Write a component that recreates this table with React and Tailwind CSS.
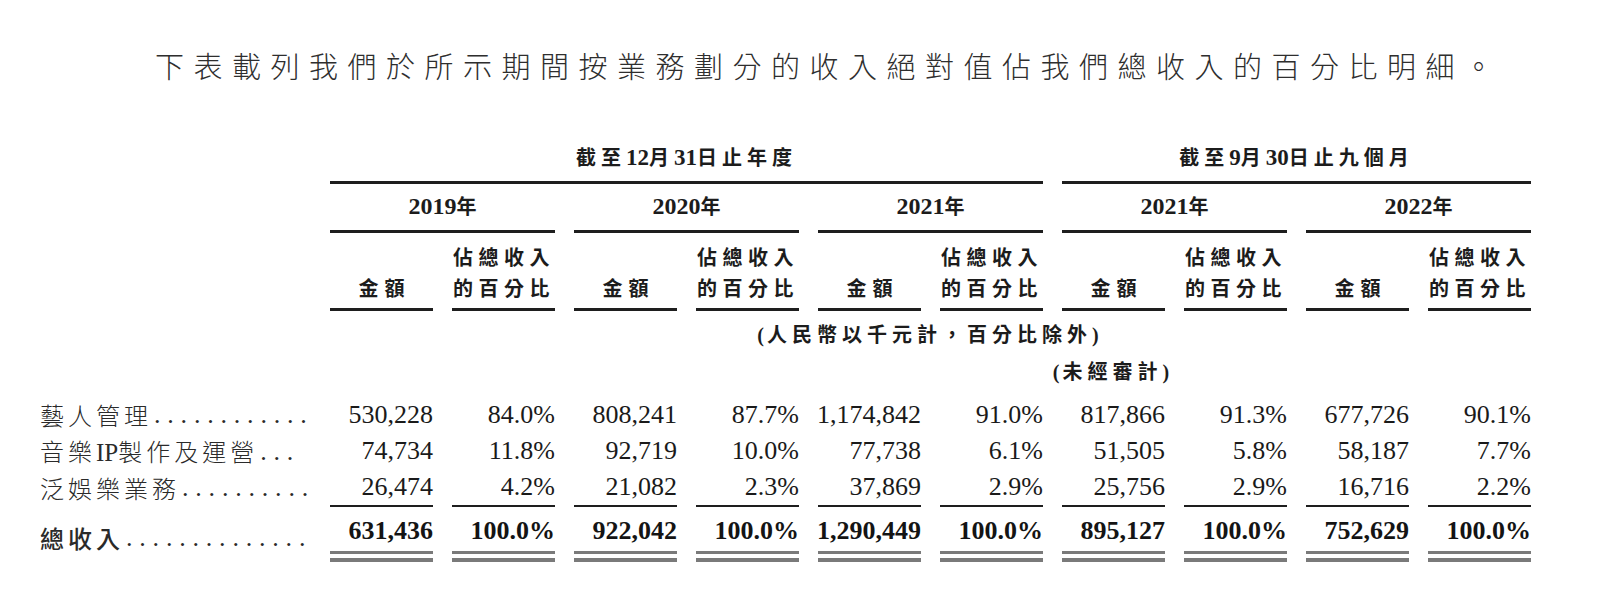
import React from "react";

// shared grid: label column + 10 value columns
const ROW = "grid grid-cols-[271px_repeat(10,103px)] gap-x-[19px] pl-[40px]";
const CJK = "font-['Noto_Sans_CJK_TC',sans-serif]";
const SERIF = "font-['Liberation_Serif','Noto_Sans_CJK_TC',serif]";

const groups = [
  { year: "2019" },
  { year: "2020" },
  { year: "2021" },
  { year: "2021" },
  { year: "2022" },
];

const rows = [
  {
    label: <>藝人管理</>,
    dots: 12,
    vals: ["530,228", "84.0%", "808,241", "87.7%", "1,174,842", "91.0%", "817,866", "91.3%", "677,726", "90.1%"],
  },
  {
    label: (
      <>
        音樂<span className={SERIF + " text-[25px] tracking-normal"}>IP</span>製作及運營
      </>
    ),
    dots: 3,
    vals: ["74,734", "11.8%", "92,719", "10.0%", "77,738", "6.1%", "51,505", "5.8%", "58,187", "7.7%"],
  },
  {
    label: <>泛娛樂業務</>,
    dots: 10,
    vals: ["26,474", "4.2%", "21,082", "2.3%", "37,869", "2.9%", "25,756", "2.9%", "16,716", "2.2%"],
  },
];

const totals = ["631,436", "100.0%", "922,042", "100.0%", "1,290,449", "100.0%", "895,127", "100.0%", "752,629", "100.0%"];

const D = ({ children }) => (
  <span className={SERIF + " text-[23px] tracking-normal"}>{children}</span>
);

const Label = ({ children, dots, bold }) => (
  <div className={"flex items-center whitespace-nowrap text-[#2a2a2a] " + (bold ? "font-medium" : "font-light")}>
    <span className={CJK + " text-[24px] tracking-[4px]"}>{children}</span>
    <span className={SERIF + " text-[26px] tracking-[6.8px] pl-[2px]"}>{".".repeat(dots)}</span>
  </div>
);

export default function App() {
  return (
    <div className="w-[1616px] h-[592px] bg-white text-[#1c1c1c] overflow-hidden">
      <p className={CJK + " pt-[45px] pl-[155px] text-[29px] leading-[40px] tracking-[9.5px] font-light text-[#2e2e2e] whitespace-nowrap"}>
        下表載列我們於所示期間按業務劃分的收入絕對值佔我們總收入的百分比明細。
      </p>

      {/* period headings */}
      <div className={ROW + " mt-[60px] " + CJK + " font-bold text-[20px] leading-[24px]"}>
        <div />
        <div className="col-span-6 border-b-[3px] border-[#1e1e1e] pb-[11px] text-center tracking-[5px] whitespace-nowrap">
          截至<D>12</D>月<D>31</D>日止年度
        </div>
        <div className="col-span-4 border-b-[3px] border-[#1e1e1e] pb-[11px] text-center tracking-[5px] whitespace-nowrap">
          截至<D>9</D>月<D>30</D>日止九個月
        </div>
      </div>

      {/* years */}
      <div className={ROW + " " + CJK + " font-bold text-[20px] leading-[24px]"}>
        <div />
        {groups.map((g, i) => (
          <div key={i} className="col-span-2 border-b-[3px] border-[#1e1e1e] pt-[10px] pb-[12px] text-center whitespace-nowrap">
            <span className={SERIF + " text-[24px]"}>{g.year}</span>年
          </div>
        ))}
      </div>

      {/* column headings */}
      <div className={ROW + " " + CJK + " font-bold text-[20px] leading-[31px]"}>
        <div />
        {groups.map((g, i) => (
          <React.Fragment key={i}>
            <div className="flex items-end justify-center border-b-[3px] border-[#1e1e1e] pt-[8px] pb-[5px] tracking-[6px] pl-[6px]">
              金額
            </div>
            <div className="border-b-[3px] border-[#1e1e1e] pt-[8px] pb-[5px] text-right tracking-[5.5px] whitespace-nowrap">
              佔總收入
              <br />
              的百分比
            </div>
          </React.Fragment>
        ))}
      </div>

      {/* units */}
      <div className={ROW + " " + CJK + " font-bold text-[20px] leading-[24px]"}>
        <div />
        <div className="col-span-10 pt-[11px] text-center tracking-[5px] whitespace-nowrap">
          <span className={SERIF + " tracking-[3px]"}>(</span>人民幣以千元計，百分比除外<span className={SERIF}>)</span>
        </div>
      </div>
      <div className={ROW + " " + CJK + " font-bold text-[20px] leading-[24px]"}>
        <div />
        <div className="col-start-8 pt-[12px] flex justify-center whitespace-nowrap tracking-[5px]">
          <span>
            <span className={SERIF + " tracking-[3px]"}>(</span>未經審計<span className={SERIF}>)</span>
          </span>
        </div>
      </div>

      {/* data */}
      <div className="mt-[13px]">
        {rows.map((r, ri) => (
          <div key={ri} className={ROW + " h-[36px] leading-[36px]"}>
            <Label dots={r.dots}>{r.label}</Label>
            {r.vals.map((v, vi) => (
              <div
                key={vi}
                className={
                  SERIF +
                  " flex justify-end whitespace-nowrap text-[26px] text-[#1a1a1a] " +
                  (ri === rows.length - 1 ? "border-b-2 border-[#1e1e1e]" : "")
                }
              >
                {v}
              </div>
            ))}
          </div>
        ))}

        <div className={ROW + " pt-[8px] leading-[36px]"}>
          <Label dots={14} bold>總收入</Label>
          {totals.map((v, vi) => (
            <div key={vi} className="flex flex-col">
              <div className={SERIF + " flex justify-end whitespace-nowrap text-[26px] font-bold text-[#141414]"}>
                {v}
              </div>
              <div className="mt-[2px] h-[3px] bg-[#7a7a7a]" />
              <div className="mt-[4px] h-[4px] bg-[#7a7a7a]" />
            </div>
          ))}
        </div>
      </div>
    </div>
  );
}
